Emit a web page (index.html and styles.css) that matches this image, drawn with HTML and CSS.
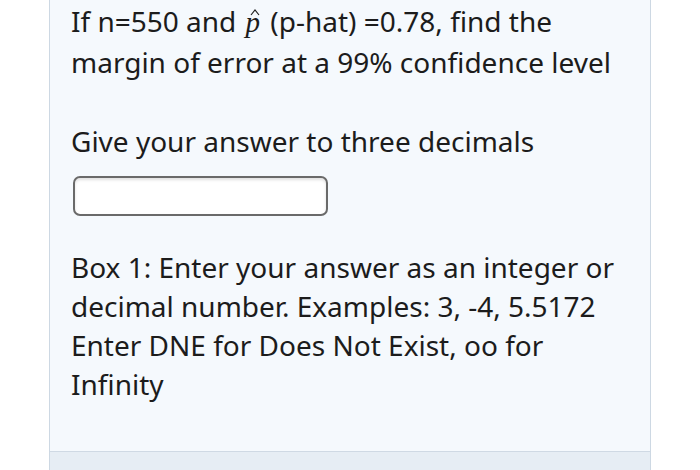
FILE: index.html
```html
<!DOCTYPE html>
<html>
<head>
<meta charset="utf-8">
<link rel="stylesheet" href="styles.css">
</head>
<body>
<div class="column">
  <div class="panel">
    <p class="q q1">If n=550 and <span class="phat"><span class="p">p</span><svg class="hat" width="10" height="7" viewBox="0 0 10 7"><polyline points="1,6 5,1 9,6" fill="none" stroke="#1f1f1f" stroke-width="1.2"/></svg></span> (p-hat) =0.78, find the margin of error at a 99% confidence level</p>
    <p class="q q2">Give your answer to three decimals</p>
    <div class="answer"><input class="box" type="text" aria-label="answer"></div>
    <p class="q q3">Box 1: Enter your answer as an integer or decimal number. Examples: 3, -4, 5.5172 Enter DNE for Does Not Exist, oo for Infinity</p>
  </div>
  <div class="footer"></div>
</div>
</body>
</html>
```
FILE: styles.css
```css
html, body {
  margin: 0;
  padding: 0;
  background: #ffffff;
}
body {
  font-family: "Noto Sans", "Open Sans", sans-serif;
  color: #1c1c1c;
  width: 700px;
  height: 470px;
  overflow: hidden;
}
.column {
  margin-left: 49px;
  width: 600px;
  border-left: 1px solid #cdd8e3;
  border-right: 1px solid #cdd8e3;
  display: flex;
  flex-direction: column;
}
.panel {
  background: #f5f9fd;
  height: 452px;
  box-sizing: border-box;
  border-bottom: 1px solid #cfd9e4;
  padding: 1px 20px 0 21px;
}
.q {
  margin: 0;
  font-size: 28px;
  line-height: 39px;
  width: 560px;
}
.q1 {
  line-height: 41px;
}
.q2 {
  margin-top: 39px;
}
.answer {
  margin-top: 15px;
  display: flex;
}
.box {
  width: 255px;
  height: 40px;
  box-sizing: border-box;
  border: 2px solid #6a6a6a;
  border-radius: 7px;
  background: #ffffff;
  box-shadow: inset 0 2px 3px rgba(0,0,0,0.12);
  margin: 0 0 0 2px;
  padding: 0 6px;
  outline: none;
}
.q3 {
  margin-top: 32px;
}
.phat {
  position: relative;
  display: inline-block;
  font-family: "Liberation Serif", "DejaVu Serif", serif;
  font-style: italic;
  font-size: 29px;
  line-height: 30px;
  margin: 0 3px 0 2px;
}
.hat {
  position: absolute;
  left: 4px;
  top: 2px;
}
.footer {
  height: 18px;
  background: #e6edf4;
}
```
